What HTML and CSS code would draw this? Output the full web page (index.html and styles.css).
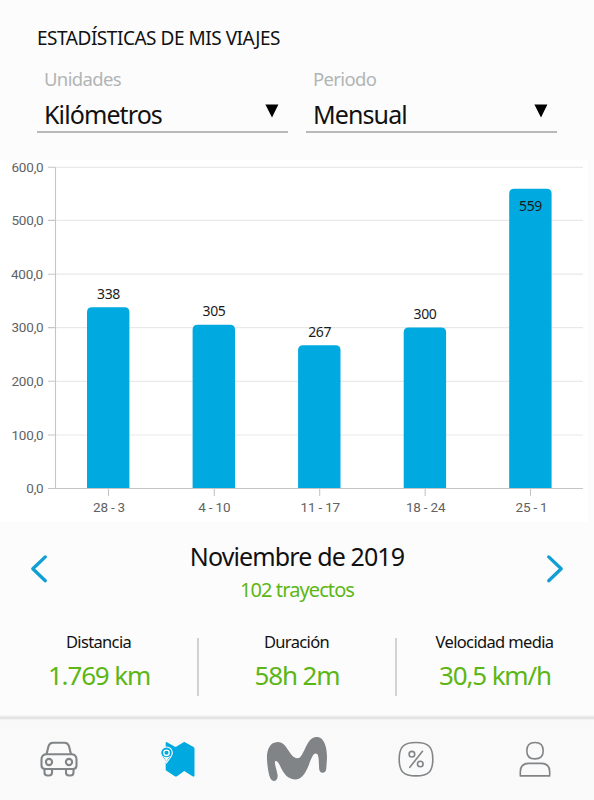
FILE: index.html
```html
<!DOCTYPE html>
<html lang="es">
<head>
<meta charset="utf-8">
<title>Estadísticas de mis viajes</title>
<link rel="stylesheet" href="styles.css">
</head>
<body>
<main class="screen">
  <header class="filters">
    <h1 class="title">ESTADÍSTICAS DE MIS VIAJES</h1>
    <div class="selects">
      <div class="select">
        <div class="select-label">Unidades</div>
        <div class="select-row"><span>Kilómetros</span><svg class="caret" viewBox="0 0 14 14"><path d="M.4 .4H13.4L7 13.4Z"/></svg></div>
      </div>
      <div class="select">
        <div class="select-label">Periodo</div>
        <div class="select-row"><span>Mensual</span><svg class="caret" viewBox="0 0 14 14"><path d="M.4 .4H13.4L7 13.4Z"/></svg></div>
      </div>
    </div>
  </header>

  <svg class="chart" viewBox="0 160 588 362">
    <g class="grid">
      <path d="M55 167.3H583M55 220.4H583M55 274.2H583M55 327.6H583M55 381.3H583M55 435H583"/>
    </g>
    <g class="axis">
      <path d="M55.5 167V489M48 167.3H55M48 220.4H55M48 274.2H55M48 327.6H55M48 381.3H55M48 435H55M48 488.5H583M108.5 489V496M214.3 489V496M319.7 489V496M425.2 489V496M530.5 489V496"/>
    </g>
    <g class="bars">
      <path d="M87 488V312.200q0-5 5-5H124.400q5 0 5 5V488Z"/>
      <path d="M192.600 488V329.800q0-5 5-5H230q5 0 5 5V488Z"/>
      <path d="M298.100 488V350.200q0-5 5-5H335.500q5 0 5 5V488Z"/>
      <path d="M403.700 488V332.600q0-5 5-5H441.100q5 0 5 5V488Z"/>
      <path d="M509.200 488V193.800q0-5 5-5H546.600q5 0 5 5V488Z"/>
    </g>
    <g class="values">
      <text x="108.500" y="298.500">338</text>
      <text x="214" y="316">305</text>
      <text x="319.700" y="336.500">267</text>
      <text x="425" y="319">300</text>
      <text x="530.500" y="211">559</text>
    </g>
    <g class="ticks-y">
      <text x="43.500" y="172">600,0</text>
      <text x="43.500" y="225.300">500,0</text>
      <text x="43" y="279">400,0</text>
      <text x="43.500" y="332.300">300,0</text>
      <text x="43.500" y="386">200,0</text>
      <text x="43.500" y="439.700">100,0</text>
      <text x="43.500" y="493.200">0,0</text>
    </g>
    <g class="ticks-x">
      <text x="109" y="511.700">28 - 3</text>
      <text x="214.300" y="511.700">4 - 10</text>
      <text x="320.300" y="511.700">11 - 17</text>
      <text x="425.600" y="511.700">18 - 24</text>
      <text x="531.500" y="511.700">25 - 1</text>
    </g>
  </svg>

  <section class="period">
    <svg class="arrow" viewBox="0 0 18 30"><path d="M15.300 2.900L2.800 14.800L15.300 26.700"/></svg>
    <div class="period-text">
      <div class="month">Noviembre de 2019</div>
      <div class="trips">102 trayectos</div>
    </div>
    <svg class="arrow" viewBox="0 0 18 30"><path d="M2.700 2.900L15.200 14.800L2.700 26.700"/></svg>
  </section>

  <section class="stats">
    <div class="stat"><div class="stat-name">Distancia</div><div class="stat-value">1.769 km</div></div>
    <div class="stat"><div class="stat-name">Duración</div><div class="stat-value">58h 2m</div></div>
    <div class="stat"><div class="stat-name">Velocidad media</div><div class="stat-value">30,5 km/h</div></div>
  </section>

  <nav class="tabs">
    <svg class="tab" viewBox="0 0 64 50">
      <g fill="none" stroke="#828587" stroke-width="2.100" stroke-linejoin="round">
        <path d="M19.500 20.200L21.500 12.200Q22.500 8.700 26 8.700H37.500Q41 8.700 42 12.200L44 20.200"/>
        <path d="M19 20.200H45Q49.500 20.700 49.500 25.500V31.500Q49.500 35 46 35H18Q14.500 35 14.500 31.500V25.500Q14.500 20.700 19 20.200Z"/>
        <path d="M17.500 35V38.500Q17.500 41.500 20.500 41.500H22Q25 41.500 25 38.500V35M39 35V38.500Q39 41.500 42 41.500H43.500Q46.500 41.500 46.500 38.500V35"/>
        <circle cx="22" cy="28" r="3.100"/><circle cx="42" cy="28" r="3.100"/>
      </g>
    </svg>
    <svg class="tab" viewBox="0 -.8 64 50">
      <path fill="#00a9e0" d="M21 7.400Q19.700 6.800 19.700 8.200V35.500L29.200 41.700Q30 42 31 41.500L38.200 36.300L46.500 41.500Q48.500 42.500 48.500 40.500V14Q48.500 12.800 47.500 12.200L39 7.400Q38.200 7 37.500 7.400L30.500 11.800Q29.500 12.300 28.500 11.800Z"/>
      <path fill="#00a9e0" stroke="#fafafa" stroke-width="1.200" d="M20.500 28C18.500 24.500 14.700 21.500 14.700 18A5.800 5.800 0 0 1 26.300 18C26.300 21.500 22.500 24.500 20.500 28Z"/>
      <circle cx="20.500" cy="18" r="2.700" fill="#00a9e0" stroke="#fff" stroke-width="1.300"/>
      <path fill="#fff" d="M16.900 21L20.500 26.500L24.100 21Q20.500 24 16.900 21Z"/>
    </svg>
    <svg class="tab tab-logo" viewBox="265 733 64 52">
      <path fill="#808487" d="M267 759C266.500 750.500 269.500 742.100 277.700 741.900C287.500 741.700 289.500 758.200 297.500 758.200C304.500 758.200 305.500 736.900 316.500 736.900C325.500 736.900 327.500 750.500 326.900 759.500C326.600 763.500 326.500 766 326.300 768.500C326 774 319.800 774.400 319.200 769C318.600 762 319.500 753.600 315.700 753.600C309.600 753.600 308.500 779.300 295.500 779.400C282 779.500 280.500 760.800 275.700 761C273.400 761.200 276.800 769.500 277.600 775C278.200 780.600 273.500 782.800 271 779.300C268.600 775.800 267.300 766 267 759Z"/>
    </svg>
    <svg class="tab" viewBox="0 0 64 50">
      <g fill="none" stroke="#828587" stroke-width="1.600" stroke-linecap="round">
        <path d="M32 8.500C44.500 8.500 48.800 12.800 48.800 25.200S44.500 41.900 32 41.900S15.200 37.600 15.200 25.200S19.500 8.500 32 8.500Z"/>
        <path d="M38.500 17.300L25.800 33.300"/><circle cx="27.900" cy="20.200" r="2.800"/><circle cx="36.300" cy="30" r="2.800"/>
      </g>
    </svg>
    <svg class="tab" viewBox="0 0 64 50">
      <g fill="none" stroke="#828587" stroke-width="1.600" stroke-linejoin="round">
        <path d="M32 8.500Q40.200 8.500 40.200 16.700T32 24.900T23.800 16.700T32 8.500Z"/>
        <path d="M17.300 41.900V37.700Q17.300 29.400 26 29.400H38Q46.700 29.400 46.700 37.700V41.900Z"/>
      </g>
    </svg>
  </nav>
</main>
</body>
</html>
```

FILE: styles.css
```css
* { box-sizing: border-box; }
body { margin: 0; background: #fcfcfc; }
.screen {
  width: 594px;
  height: 800px;
  display: flex;
  flex-direction: column;
  font-family: "Noto Sans", sans-serif;
  color: #111;
  overflow: hidden;
  white-space: nowrap;
}
.filters { height: 160px; padding: 26px 37px 0; }
.title { margin: 0; font-size: 19px; font-weight: 400; line-height: 25px; letter-spacing: -0.47px; }
.selects { display: flex; gap: 18px; margin-top: 15px; }
.select { width: 251px; height: 67px; border-bottom: 2px solid #b9b9b9; padding: 0 9px 0 7px; }
.select-label { font-size: 18.500px; line-height: 26px; color: #b1b5b5; letter-spacing: -0.65px; }
.select-row {
  display: flex;
  justify-content: space-between;
  align-items: flex-start;
  font-size: 25px;
  line-height: 36px;
  margin-top: 4px;
  letter-spacing: -0.9px;
}
.caret { width: 14px; height: 14px; margin-top: 8px; fill: #000; }

.chart { width: 588px; height: 362px; background: #fff; flex: none; }
.grid path { stroke: #e9e9e9; stroke-width: 1.200; fill: none; }
.axis path { stroke: #c4c6c6; stroke-width: 1.100; fill: none; }
.bars { fill: #00a9e0; }
.values { font-size: 14px; fill: #1b1b1b; text-anchor: middle; letter-spacing: -0.3px; }
.ticks-y, .ticks-x { font-family: Roboto, sans-serif; font-size: 13.500px; fill: #626262; letter-spacing: -0.2px; }
.ticks-y { text-anchor: end; }
.ticks-x { text-anchor: middle; }

.period { height: 107px; padding: 16px 30px 0; display: flex; justify-content: space-between; }
.arrow { width: 18px; height: 30px; margin-top: 16px; fill: none; stroke: #109fd5; stroke-width: 3.300; stroke-linecap: round; stroke-linejoin: round; }
.period-text { text-align: center; }
.month { font-size: 25px; line-height: 36px; letter-spacing: -0.87px; }
.trips { font-size: 20px; line-height: 32px; color: #5cb615; letter-spacing: -0.9px; }

.stats { display: flex; height: 86px; }
.stat { width: 198.500px; text-align: center; position: relative; }
.stat + .stat::before { content: ""; position: absolute; left: -1.500px; top: 9px; width: 2px; height: 58px; background: #d2d2d2; }
.stat-name { font-size: 16.500px; line-height: 26px; letter-spacing: -0.65px; padding-right: 1px; }
.stat-value { font-size: 26px; line-height: 40px; color: #5cb615; letter-spacing: -1.15px; }

.tabs {
  height: 85px;
  padding: 19px 27px 0;
  display: flex;
  justify-content: space-between;
  background: linear-gradient(#fcfcfc 0, #dedede 3px, #f9f9f9 5px, #fafafa 100%);
}
.tab { width: 64px; height: 50px; flex: none; }
.tab-logo { height: 52px; margin-top: -1px; }
```
